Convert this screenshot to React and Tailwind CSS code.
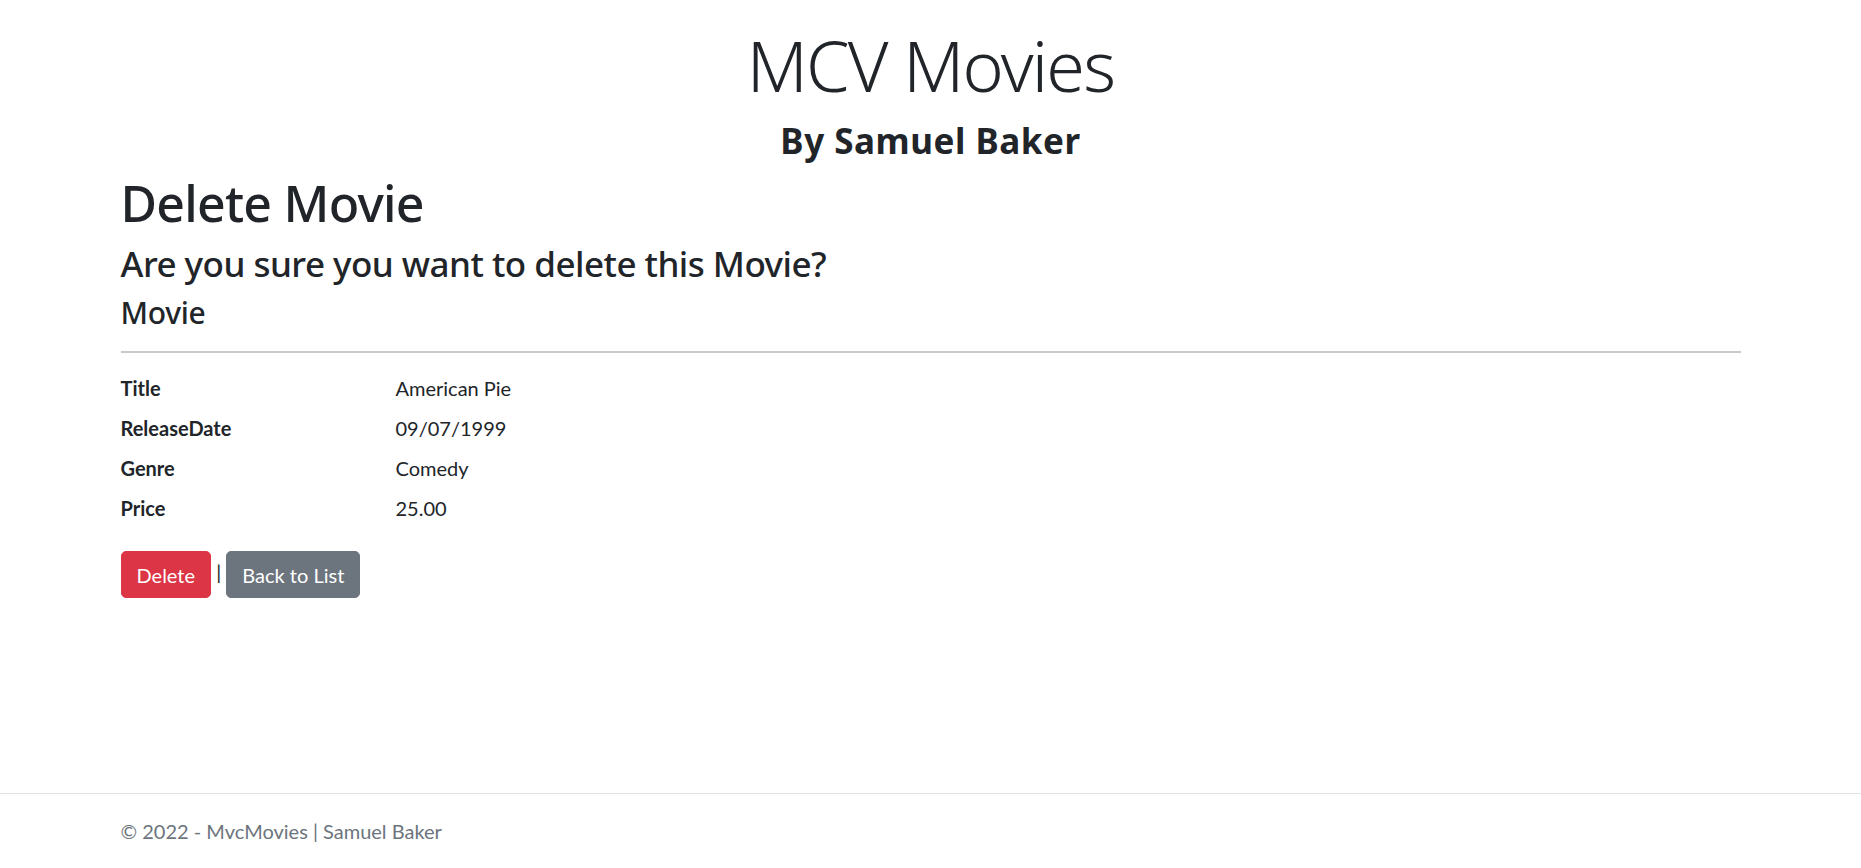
import React from "react";

const movie = [
  ["Title", "American Pie"],
  ["ReleaseDate", "09/07/1999"],
  ["Genre", "Comedy"],
  ["Price", "25.00"],
];

const body = { fontFamily: '"Segoe UI", Lato, "Noto Sans", sans-serif' };
const head = { fontFamily: '"Segoe UI", "Noto Sans", "Open Sans", sans-serif' };

export default function App() {
  return (
    <div className="min-h-screen flex flex-col bg-white text-[#212529] text-[20px] leading-[1.5]" style={body}>
      <header>
        <div className="h-0 shadow-[0_5px_15px_rgba(0,0,0,0.05)]" />
      </header>

      <div className="mx-auto w-[1650px] px-[15px]">
        <main className="pb-[20px]">
          <div className="text-center pt-[23px]" style={head}>
            <h1 className="text-[70px] font-light leading-[1.2] tracking-[-0.025em] mb-[13px]">MCV Movies</h1>
            <h3 className="text-[35px] font-bold leading-[1.2] tracking-[0.015em] mb-[11px]">By Samuel Baker</h3>
          </div>

          <div style={head}>
            <h1 className="text-[50px] font-medium leading-[1.2] tracking-[-0.015em] mb-[10px]">Delete Movie</h1>
            <h3 className="text-[35px] font-medium leading-[1.2] tracking-[-0.015em] mb-[10px]">
              Are you sure you want to delete this Movie?
            </h3>
          </div>
          <div>
            <h4 className="text-[30px] font-medium leading-[1.2] tracking-[-0.01em] mb-[10px]" style={head}>
              Movie
            </h4>
            <hr className="my-[20px] border-t-2 border-[#c8c9ca]" />
            <dl className="grid grid-cols-[275px_1fr] -mx-[15px] mb-[18px]">
              {movie.map(([k, v]) => (
                <React.Fragment key={k}>
                  <dt className="px-[15px] font-bold mb-[10px]">{k}</dt>
                  <dd className="px-[15px] mb-[10px]">{v}</dd>
                </React.Fragment>
              ))}
            </dl>

            <form>
              <button
                type="button"
                className="inline-block align-middle bg-[#dc3545] text-white border border-[#dc3545] rounded-[5px] px-[15px] py-[7.5px] leading-[30px]"
              >
                Delete
              </button>{" "}
              <span className="text-[#212529]">|</span>{" "}
              <a
                href="#"
                className="inline-block align-middle bg-[#6c757d] text-white border border-[#6c757d] rounded-[5px] px-[15px] py-[7.5px] leading-[30px]"
              >
                Back to List
              </a>
            </form>
          </div>
        </main>
      </div>

      <footer className="mt-auto border-t border-[#dee2e6] text-[#6c757d] leading-[74px] whitespace-nowrap">
        <div className="mx-auto w-[1650px] px-[15px]">
          © 2022 - MvcMovies | Samuel Baker
        </div>
      </footer>
    </div>
  );
}
